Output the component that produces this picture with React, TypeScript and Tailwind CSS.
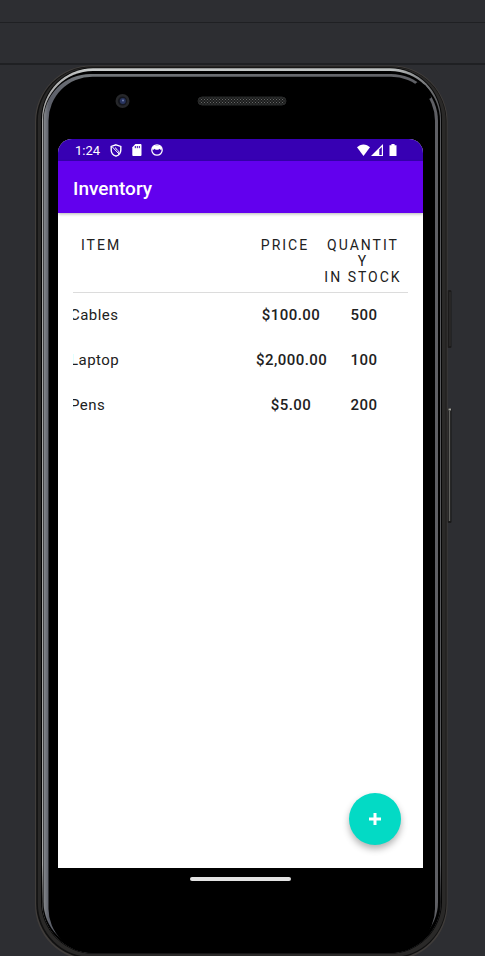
import React from "react";

type Item = { name: string; price: string; quantity: number };

const items: Item[] = [
  { name: "Cables", price: "$100.00", quantity: 500 },
  { name: "Laptop", price: "$2,000.00", quantity: 100 },
  { name: "Pens", price: "$5.00", quantity: 200 },
];

// Phone body: outer shell, metallic rim, side keys, camera and speaker.
function DeviceFrame() {
  return (
    <svg
      className="absolute inset-0 h-full w-full overflow-visible"
      viewBox="35 65 415 891"
      preserveAspectRatio="none"
      aria-hidden="true"
    >
      <defs>
        <linearGradient id="rim" x1="0" y1="0" x2="1" y2="0">
          <stop offset="0" stopColor="#a4a4a4" />
          <stop offset="0.12" stopColor="#c9cccc" />
          <stop offset="0.88" stopColor="#bcc0c0" />
          <stop offset="1" stopColor="#56575a" />
        </linearGradient>
        <linearGradient id="rimFade" x1="0" y1="0" x2="0" y2="1">
          <stop offset="0" stopColor="#000" stopOpacity="0" />
          <stop offset="0.9" stopColor="#000" stopOpacity="0" />
          <stop offset="0.96" stopColor="#000" />
        </linearGradient>
        <linearGradient id="glass" x1="0" y1="0" x2="1" y2="0">
          <stop offset="0" stopColor="#85888c" />
          <stop offset="0.014" stopColor="#5b5e68" />
          <stop offset="0.1" stopColor="#72767a" />
          <stop offset="1" stopColor="#5e5f64" />
        </linearGradient>
        <pattern id="mesh" width="3" height="3" patternUnits="userSpaceOnUse">
          <rect width="3" height="3" fill="#1b1c1c" />
          <rect width="1" height="1" fill="#666867" />
          <rect x="1.5" y="1.5" width="1" height="1" fill="#5a5c5b" />
        </pattern>
      </defs>
      <rect x="447.5" y="290" width="4" height="58" rx="1.5" fill="#1b1a1a" />
      <path d="M450 292V346" stroke="#343333" />
      <rect x="447.5" y="408" width="4" height="115" rx="1.5" fill="#191919" />
      <path d="M449.5 411V521" stroke="#62625f" strokeWidth="1.4" />
      <path d="M448.5 409.5H451" stroke="#a4a49f" strokeWidth="2" />
      <rect x="35" y="65.5" width="412.5" height="895" rx="56" fill="#403d3b" />
      <rect x="36.2" y="66.5" width="410.3" height="892" rx="55" fill="#111" />
      <rect x="37.8" y="67" width="408" height="890" rx="54" fill="#2a2928" />
      <rect x="41" y="67.6" width="401" height="886" rx="52" fill="#050505" />
      <rect x="42" y="68.3" width="399" height="884.5" rx="51" fill="url(#rim)" />
      <rect x="42" y="68.3" width="399" height="884.5" rx="51" fill="url(#rimFade)" />
      <rect x="43" y="71" width="397" height="882" rx="50" fill="#000" />
      <rect x="43.5" y="74" width="394.5" height="875" rx="47" fill="url(#glass)" />
      <rect x="48.5" y="76.7" width="386.5" height="876" rx="44" fill="#000" />
      <path d="M90 952H395V946H90Z" fill="#000" />
      <path d="M415 84L417.5 82L425 85L430.5 92L431 98L427 100Z" fill="#000" />
      <circle cx="122.5" cy="101" r="7" fill="#26272a" />
      <circle cx="122.5" cy="101" r="4.6" fill="#14161d" />
      <circle cx="122.8" cy="101" r="3" fill="#28345f" />
      <circle cx="123" cy="100.5" r="1" fill="#7180ae" />
      <rect x="198" y="97" width="88" height="8" rx="4" fill="url(#mesh)" stroke="#292a2a" />
    </svg>
  );
}

function StatusBar() {
  return (
    <div className="flex h-[22px] items-center justify-between bg-[#3700b3] pr-[26px] pl-[17px] text-white">
      <div className="flex items-center">
        <span className="pt-0.5 text-[13px] leading-4">1:24</span>
        <svg className="ml-[10px]" width="12" height="13" viewBox="0 0 12 13" fill="none" stroke="currentColor" strokeWidth="1.4" aria-hidden="true">
          <path d="M6 .8L10.8 2.4V6C10.8 9 9 11.2 6 12.2C3 11.2 1.2 9 1.2 6V2.4Z" />
          <path d="M2.4 3L9 10M5.5 3.5C5.5 6 9.5 6 9 9" strokeWidth="1" />
        </svg>
        <svg className="ml-[10px]" width="10" height="12" viewBox="0 0 10 12" aria-hidden="true">
          <path d="M3.4 0H8.6Q9.5 0 9.5 1V11Q9.5 12 8.6 12H1.2Q.3 12 .3 11V3.2Z" fill="currentColor" />
          <path d="M3.3 2V4.2M5.3 2V4.2M7.3 2V4.2" stroke="#3700b3" />
        </svg>
        <svg className="ml-[9px]" width="12" height="12" viewBox="0 0 12 12" aria-hidden="true">
          <circle cx="6" cy="6" r="5.2" fill="none" stroke="currentColor" strokeWidth="1.3" />
          <path d="M1.2 5.4V3.6L3.2 1.4H8.8L10.8 3.6V5.4L9.4 5.7L8.4 4.8L7.3 5.7H4.7L3.6 4.8L2.6 5.7Z" fill="currentColor" />
        </svg>
      </div>
      <div className="flex items-center">
        <svg width="13" height="12" viewBox="0 0 14 12" preserveAspectRatio="none" aria-hidden="true">
          <path d="M0 3.3C3.8-.6 10.2-.6 14 3.3L7 12Z" fill="currentColor" />
        </svg>
        <svg className="ml-px" width="12" height="12" viewBox="0 0 12 12" aria-hidden="true">
          <path d="M0 12L12 0V12Z" fill="currentColor" />
          <path d="M8.3 5.4L10.8 2.9V10.9H8.3Z" fill="#3700b3" />
        </svg>
        <svg className="ml-1.5" width="8" height="12" viewBox="0 0 8 12" aria-hidden="true">
          <path d="M.5 1.2H2.4V0H5.6V1.2H7.5V12H.5Z" fill="currentColor" />
        </svg>
      </div>
    </div>
  );
}

function InventoryTable() {
  return (
    <div className="mx-[15px] overflow-hidden pt-4">
      <table className="w-full table-fixed border-collapse text-[#212121]">
        <colgroup>
          <col />
          <col className="w-[72px]" />
          <col className="w-[72px]" />
          <col className="w-[8px]" />
        </colgroup>
        <thead>
          <tr className="border-b border-[#dcdcdc] align-top text-[14px] leading-4 tracking-[2px]">
            <th scope="col" className="pt-2 pb-[7px] pl-2 text-left font-normal">ITEM</th>
            <th scope="col" className="pt-2 pr-3.5 pb-[7px] font-normal">PRICE</th>
            <th scope="col" className="pt-2 pb-[7px] font-normal">
              <span className="-mr-0.5 -ml-1 block break-all">QUANTITY</span>
              <span className="-mr-0.5 -ml-1 block whitespace-nowrap">IN STOCK</span>
            </th>
            <td />
          </tr>
        </thead>
        <tbody className="text-[15px] leading-5 tracking-[0.03em]">
          {items.map((item) => (
            <tr key={item.name} className="h-[45px]">
              <td>
                <span className="-ml-[3px] block">{item.name}</span>
              </td>
              <td className="pr-0.5 text-center font-medium whitespace-nowrap">{item.price}</td>
              <td className="text-center font-medium">{item.quantity}</td>
              <td />
            </tr>
          ))}
        </tbody>
      </table>
    </div>
  );
}

function Screen() {
  return (
    <main className="relative h-[729px] overflow-hidden rounded-t-[14px] bg-white">
      <StatusBar />
      <header className="flex h-[52px] items-center bg-[#6200ee] px-[15px] pt-1 shadow-[0_1px_3px_rgba(0,0,0,0.3)]">
        <h1 className="text-[19px] leading-6 font-medium text-white">Inventory</h1>
      </header>
      <InventoryTable />
      <button
        type="button"
        aria-label="Add item"
        className="absolute right-[22px] bottom-[23px] flex size-[52px] items-center justify-center rounded-full bg-[#03dac5] text-white shadow-[0_4px_7px_rgba(0,0,0,0.3)]"
      >
        <svg width="12" height="12" viewBox="0 0 12 12" aria-hidden="true">
          <path d="M6 0V12M0 6H12" stroke="currentColor" strokeWidth="3" />
        </svg>
      </button>
    </main>
  );
}

export default function App() {
  return (
    <div className="flex min-h-screen flex-col overflow-hidden bg-[#2d2e32] font-['Roboto','Liberation_Sans',sans-serif]">
      <div className="h-[23px] border-b border-[#1f2023]" />
      <div className="h-[42px] border-b-2 border-[#1f2023]" />
      <div className="relative mx-auto h-[891px] w-[415px] pt-[74px] pr-[27px] pl-[23px]">
        <DeviceFrame />
        <Screen />
        <div className="relative mx-auto mt-[9px] h-1 w-[101px] rounded-full bg-[#e2e2e2]" />
      </div>
    </div>
  );
}
